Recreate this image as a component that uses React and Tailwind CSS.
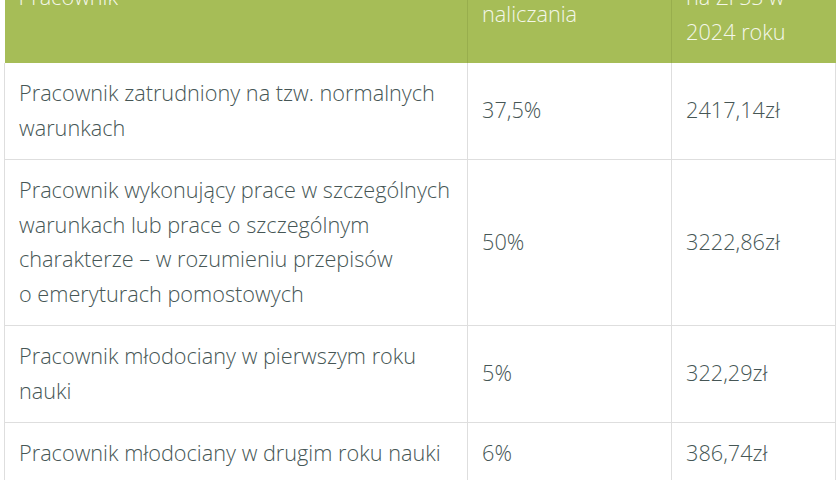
const ROWS = [
  { label: "Pracownik zatrudniony na tzw. normalnych warunkach", rate: "37,5%", amount: "2417,14zł" },
  {
    label: (
      <>
        Pracownik wykonujący prace w szczególnych warunkach lub prace o szczególnym charakterze – w rozumieniu przepisów
        <br />o emeryturach pomostowych
      </>
    ),
    rate: "50%",
    amount: "3222,86zł",
  },
  { label: "Pracownik młodociany w pierwszym roku nauki", rate: "5%", amount: "322,29zł" },
  { label: "Pracownik młodociany w drugim roku nauki", rate: "6%", amount: "386,74zł" },
  { label: "Pracownik młodociany w trzecim roku nauki", rate: "7%", amount: "451,20zł" },
];

export default function App() {
  return (
    <div className="h-[480px] w-[840px] overflow-hidden bg-white px-[4px] font-['Open_Sans',sans-serif]">
      <table className="-mt-[68px] w-[831px] table-fixed border-collapse text-[21.7px] font-light leading-[34.5px] text-[#465655]">
        <colgroup>
          <col className="w-[463px]" />
          <col className="w-[204px]" />
          <col className="w-[164px]" />
        </colgroup>
        <thead>
          <tr className="bg-[#a6bd57] text-left text-[#f4f7ea]">
            <th className="border-r border-[#98ae4d] px-[14px] py-[13.5px] align-middle font-light">Pracownik</th>
            <th className="border-r border-[#98ae4d] px-[14px] py-[13.5px] align-middle font-light">
              Wskaźnik
              <br />
              naliczania
            </th>
            <th className="px-[14px] py-[13.5px] align-middle font-light">
              Odpis
              <br />
              na ZFŚS w
              <br />
              2024 roku
            </th>
          </tr>
        </thead>
        <tbody>
          {ROWS.map((row, i) => (
            <tr key={i} className="border-b border-[#dedede]">
              <td className="border-x border-[#dedede] px-[14px] py-[13.5px] align-middle">{row.label}</td>
              <td className="border-r border-[#dedede] px-[14px] py-[13.5px] align-middle">{row.rate}</td>
              <td className="border-r border-[#dedede] px-[14px] py-[13.5px] align-middle">{row.amount}</td>
            </tr>
          ))}
        </tbody>
      </table>
    </div>
  );
}
